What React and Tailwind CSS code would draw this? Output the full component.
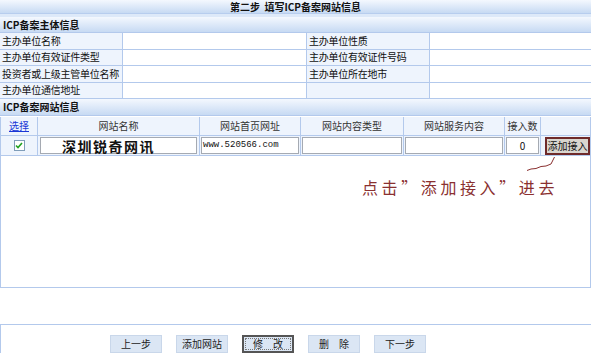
import React from "react";

const cjk = { fontFamily: '"Noto Sans CJK SC", "Noto Sans", sans-serif' };

const hdr = "bg-gradient-to-b from-[#f4f8fe] to-[#c7daf3]";
const lbl = "bg-[#eef4fd] border-b border-r border-[#b3c9ec] pl-[2px] flex items-center whitespace-nowrap tracking-[-0.25px]";
const val = "bg-white border-b border-r border-[#b3c9ec]";

function CheckBox() {
  return (
    <div className="w-[11px] h-[11px] border border-[#7f9db9] bg-white flex items-center justify-center">
      <svg width="8" height="7" viewBox="0 0 8 7">
        <path d="M1 3.5 L3 5.5 L7 1" fill="none" stroke="#21a121" strokeWidth="1.6" />
      </svg>
    </div>
  );
}

function NavButton({ label, focused }) {
  return (
    <button
      className={`w-[52px] h-[18px] bg-[#dbe6f4] text-[10px] text-[#222] flex items-center justify-center ${
        focused ? "border-2 border-[#555] outline-1 outline-dotted outline-[#777] -outline-offset-4" : "border border-[#c9d7ea]"
      }`}
    >
      {label}
    </button>
  );
}

export default function App() {
  const rows = [
    ["主办单位名称", "主办单位性质"],
    ["主办单位有效证件类型", "主办单位有效证件号码"],
    ["投资者或上级主管单位名称", "主办单位所在地市"],
    ["主办单位通信地址", ""],
  ];

  const cols = ["网站名称", "网站首页网址", "网站内容类型", "网站服务内容", "接入数"];

  return (
    <div className="relative w-[591px] h-[353px] overflow-hidden bg-white text-[10px] text-[#111] leading-none" style={cjk}>
      {/* title */}
      <div className={`h-[14px] flex items-center justify-center font-bold border-b border-[#b7cdee] ${hdr}`}>
        第二步&nbsp;&nbsp;填写ICP备案网站信息
      </div>
      <div className="h-[3px] bg-[#dde9f9]" />

      {/* subject info */}
      <div className={`h-[16px] flex items-center pl-[3px] font-bold border-b border-[#b3c9ec] ${hdr}`}>
        ICP备案主体信息
      </div>
      <div className="grid grid-cols-[123px_184px_123px_1fr]">
        {rows.map(([a, b], i) => (
          <React.Fragment key={i}>
            <div className={`${lbl} h-[16.5px]`}>{a}</div>
            <div className={`${val} h-[16.5px]`} />
            <div className={`${lbl} h-[16.5px]`}>{b}</div>
            <div className={`${val} h-[16.5px] border-r-0`} />
          </React.Fragment>
        ))}
      </div>

      {/* website info */}
      <div className={`h-[17px] flex items-center pl-[3px] font-bold border-b border-[#b3c9ec] ${hdr}`}>
        ICP备案网站信息
      </div>
      <div className="border-l border-r border-[#b3c9ec] mt-[1px]">
        <div className="grid grid-cols-[37px_162px_101px_103px_101px_36px_1fr] h-[19px] bg-[#eef4fd] border-b border-[#b3c9ec]">
          <div className="flex items-center justify-center border-r border-[#b3c9ec] text-[#1a37d6] underline">选择</div>
          {cols.map((c) => (
            <div key={c} className="flex items-center justify-center border-r border-[#b3c9ec] text-[#333]">
              {c}
            </div>
          ))}
          <div />
        </div>
        <div className="grid grid-cols-[37px_162px_101px_103px_101px_36px_1fr] h-[20px] bg-[#eef4fd] border-b border-[#b3c9ec]">
          <div className="flex items-center justify-center border-r border-[#b3c9ec]">
            <CheckBox />
          </div>
          <div className="flex items-center px-[2px] border-r border-[#b3c9ec]">
            <div className="w-full h-[17px] bg-white border border-[#a5aab2] flex items-center pl-[21px] text-[14px] font-bold tracking-[1.5px]">
              深圳锐奇网讯
            </div>
          </div>
          <div className="flex items-center px-[1px] border-r border-[#b3c9ec]">
            <div
              className="w-full h-[17px] bg-white border border-[#a5aab2] flex items-center pl-[1px] text-[9px]"
              style={{ fontFamily: '"Liberation Mono", monospace' }}
            >
              www.520566.com
            </div>
          </div>
          <div className="flex items-center px-[1px] border-r border-[#b3c9ec]">
            <div className="w-full h-[17px] bg-white border border-[#a5aab2]" />
          </div>
          <div className="flex items-center px-[1px] border-r border-[#b3c9ec]">
            <div className="w-full h-[17px] bg-white border border-[#a5aab2]" />
          </div>
          <div className="flex items-center px-[1px] border-r border-[#b3c9ec]">
            <div className="w-full h-[17px] bg-white border border-[#a5aab2] flex items-center justify-center">0</div>
          </div>
          <div className="flex items-center pl-[4px]">
            <div className="w-full h-[18px] bg-[#d9d6cf] border-2 border-[#6f2a2a] flex items-center justify-center text-[10px]">
              添加接入
            </div>
          </div>
        </div>

        <div className="h-[132px] bg-white border-b border-[#b3c9ec] pt-[23px] pl-[361px]">
          <div className="text-[16px] text-[#8a3030] tracking-[3.6px] whitespace-nowrap">点击”添加接入”进去</div>
        </div>
      </div>

      <div className="h-[36px]" />

      <div className="border-t border-l border-[#b3c9ec] pt-[10px] pl-[109px] flex gap-[14px]">
        <NavButton label="上一步" />
        <NavButton label="添加网站" />
        <NavButton label="修　改" focused />
        <NavButton label="删　除" />
        <NavButton label="下一步" />
      </div>

      <svg className="absolute left-0 top-0 pointer-events-none" width="591" height="353">
        <path
          d="M554.5 157 L551 164 L546 166 L541 166.5 L536 168.5 L531 169 L527 170.5"
          fill="none"
          stroke="#8a3030"
          strokeWidth="1"
        />
      </svg>
    </div>
  );
}
